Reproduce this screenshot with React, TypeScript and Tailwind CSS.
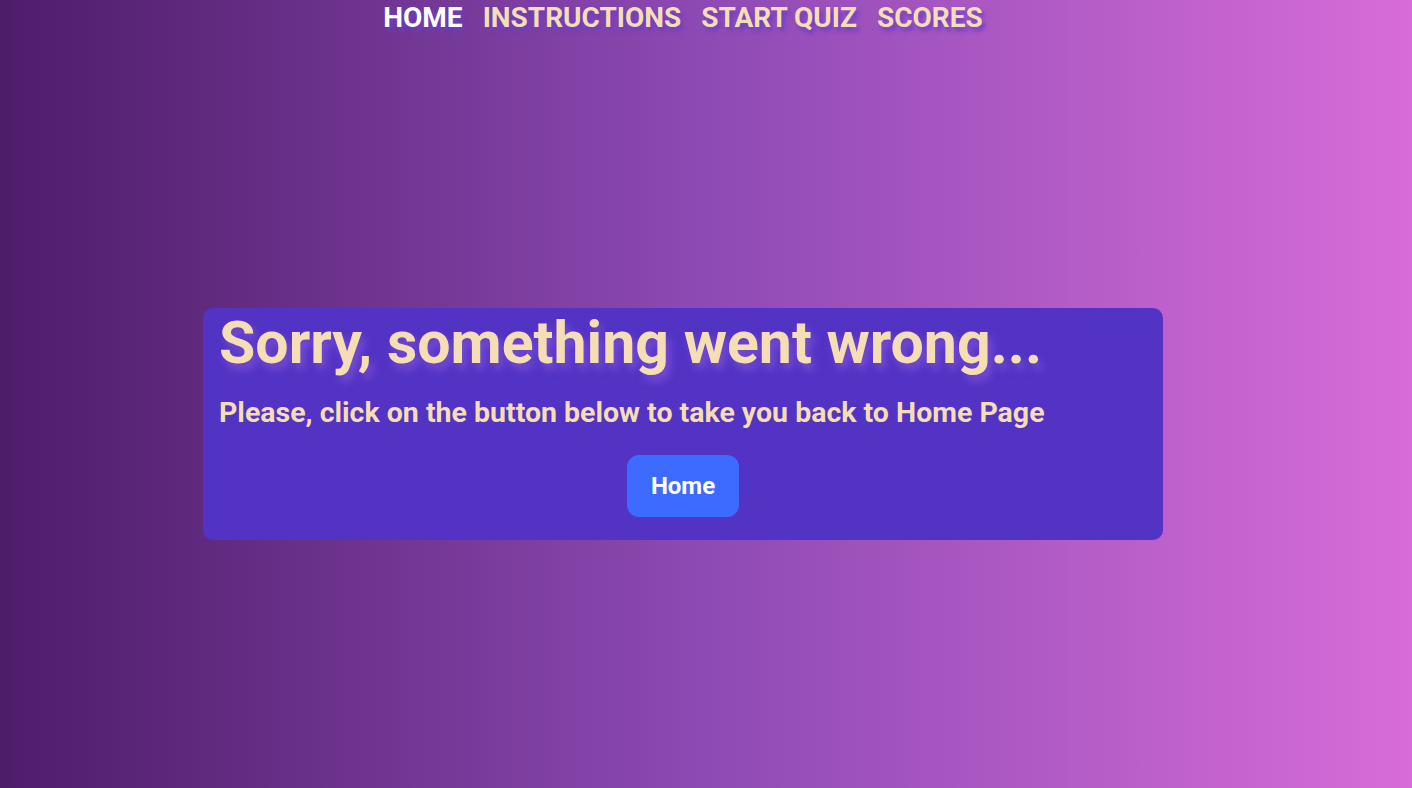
export default function App() {
  const links = ["HOME", "INSTRUCTIONS", "START QUIZ", "SCORES"];
  return (
    <div
      className="min-h-screen w-full bg-gradient-to-r from-[#4e1d6a] via-[#8e4ab4] to-[#d86cd8]"
      style={{ fontFamily: 'Roboto, sans-serif' }}
    >
      <div className="w-[1366px] flex flex-col items-center">
        <nav className="flex gap-5 h-[36px] items-start">
          {links.map((l, i) => (
            <a
              key={l}
              className={`text-[28px] leading-[35px] font-bold [text-shadow:3px_4px_4px_#6a3ec9] ${
                i === 0 ? "text-white" : "text-[#f5deb3]"
              }`}
            >
              {l}
            </a>
          ))}
        </nav>
        <div className="mt-[272px] w-[960px] rounded-[10px] bg-[#5233c4] px-4 pt-[1px] pb-[23px]">
          <h1 className="whitespace-nowrap text-[59px] leading-[68px] font-bold text-[#f5deb3] [text-shadow:4px_6px_8px_#7a4fd6]">
            Sorry, something went wrong...
          </h1>
          <p className="mt-[19px] text-[28.5px] leading-[34px] font-bold text-[#f5deb3]">
            Please, click on the button below to take you back to Home Page
          </p>
          <div className="mt-[25px] flex justify-center">
            <button className="w-[112px] h-[62px] rounded-xl bg-[#3d6bff] text-white text-[24px] font-bold">
              Home
            </button>
          </div>
        </div>
      </div>
    </div>
  );
}
